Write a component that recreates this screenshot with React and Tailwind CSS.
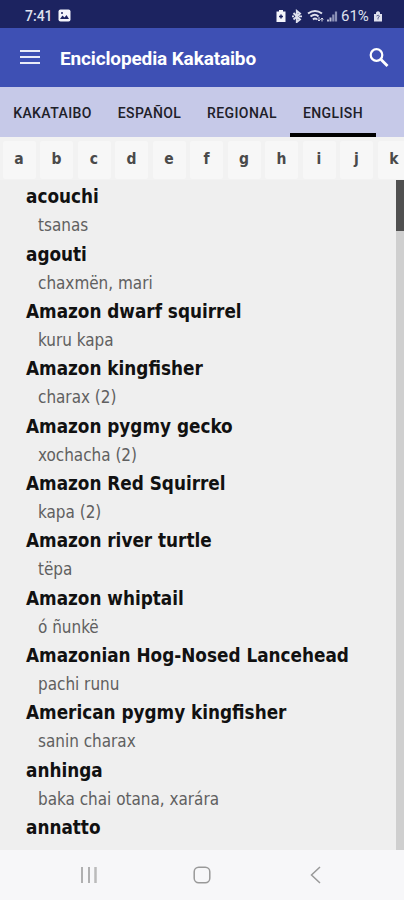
import React from "react";

const ENTRIES = [
  ["acouchi", "tsanas"],
  ["agouti", "chaxmën, mari"],
  ["Amazon dwarf squirrel", "kuru kapa"],
  ["Amazon kingfisher", "charax (2)"],
  ["Amazon pygmy gecko", "xochacha (2)"],
  ["Amazon Red Squirrel", "kapa (2)"],
  ["Amazon river turtle", "tëpa"],
  ["Amazon whiptail", "ó ñunkë"],
  ["Amazonian Hog-Nosed Lancehead", "pachi runu"],
  ["American pygmy kingfisher", "sanin charax"],
  ["anhinga", "baka chai otana, xarára"],
  ["annatto", ""],
];

const LETTERS = ["a", "b", "c", "d", "e", "f", "g", "h", "i", "j", "k"];

function StatusBar() {
  return (
    <div className="flex h-7 shrink-0 items-center bg-[#1c2360] pl-[25px] pr-[21px] pt-[3px] text-[#dfe1ee]">
      <span className="w-[33px] text-[14px] font-medium leading-4">7:41</span>
      <svg className="h-[13px] w-[13px]" viewBox="0 0 13 13">
        <rect x="0.5" y="0.5" width="12" height="12" rx="2" fill="#f4f5fb" />
        <path d="M2 10l2.5-3.5 2 2 2-2.5L11 10z" fill="#1c2360" />
        <circle cx="4" cy="4" r="1" fill="#1c2360" />
      </svg>
      <svg className="ml-auto h-[14px] w-[62px]" viewBox="0 0 62 14">
        <path d="M3 1h4v1.500h2.500V13H0.500V2.500H3z" fill="#f4f5fb" />
        <path d="M5 5.500v4M3 7.500h4" stroke="#1c2360" strokeWidth="1.500" />
        <path d="M17.500 4l6.500 6.500-3.200 2.500V2L24 4.500 17.500 10.500" fill="none" stroke="#dfe1ee" strokeWidth="1.900" />
        <path d="M16 7.300h2m5 0h3" stroke="#dfe1ee" strokeWidth="1.700" />
        <path d="M32 4.500q7-5 14 0M34.500 7.500q4.500-3.500 8 0M37 10.500q2-2 4 0" fill="none" stroke="#dfe1ee" strokeWidth="2" />
        <path d="M43 8v4m-1.500-1.500L43 12l1.500-1.500M46 12.500V9m-1.300 1.500L46 9l1.300 1.500" fill="none" stroke="#dfe1ee" strokeWidth="1" />
        <path d="M52 12.500V10.500M54.500 12.500V8.500" stroke="#b9bdd6" strokeWidth="2" />
        <path d="M57.300 12.500V5.500M60 12.500V2.500" stroke="#8b90b6" strokeWidth="2.200" />
      </svg>
      <span className="ml-[3px] w-[31px] text-[15px] leading-4">61%</span>
      <svg className="ml-[1px] h-[12px] w-[10px]" viewBox="0 0 10 12">
        <path d="M3 4V2.500q2-2.500 4 0V4h2v7.500H1V4z" fill="#dfe1ee" />
        <path d="M3.500 6q2-1.500 3 0l-1.500 2v1.500" fill="none" stroke="#5d638f" />
      </svg>
    </div>
  );
}

function AppBar() {
  return (
    <div className="flex h-[59px] shrink-0 items-center bg-[#3e50b4] pl-5 pr-[15px] text-white">
      <svg className="-mt-px h-4 w-5" viewBox="0 0 20 16">
        <path d="M0 2h20M0 8h20M0 14h20" stroke="#e9ebf8" strokeWidth="2" />
      </svg>
      <h1 className="ml-5 mt-[3px] text-[19px] font-bold tracking-[-0.140px]">Enciclopedia Kakataibo</h1>
      <svg className="ml-auto h-5 w-5" viewBox="0 0 20 20">
        <circle cx="7.500" cy="7" r="5.800" fill="none" stroke="white" strokeWidth="2.200" />
        <path d="M12 11.500l6.500 6.500" stroke="white" strokeWidth="2.800" />
      </svg>
    </div>
  );
}

function Tabs() {
  return (
    <div className="flex h-[50px] shrink-0 bg-[#c6c9e8] text-[14px] font-medium tracking-[0.400px] text-[#202028]">
      <div className="flex w-[105px] items-center justify-center pt-[2px]">KAKATAIBO</div>
      <div className="flex w-[89px] items-center justify-center pt-[2px]">ESPAÑOL</div>
      <div className="flex w-[96px] items-center justify-center pt-[2px]">REGIONAL</div>
      <div className="flex w-[86px] items-center justify-center border-b-4 border-black pt-[6px]">ENGLISH</div>
    </div>
  );
}

function LetterRow() {
  return (
    <div className="flex h-[43px] shrink-0 gap-[4.500px] overflow-hidden bg-[#f2f2f2] pl-[2.500px] pt-1 font-['DejaVu_Sans_Condensed','DejaVu_Sans',sans-serif] text-[15.500px] font-bold text-[#4a4a4a]">
      {LETTERS.map((l) => (
        <div key={l} className="flex h-[38px] w-[33px] shrink-0 items-center justify-center rounded-xs bg-[#f7f7f7]">
          {l}
        </div>
      ))}
    </div>
  );
}

function EntryList() {
  return (
    <div className="flex min-h-0 flex-1 bg-[#efefef]">
      <div className="min-w-0 flex-1 overflow-hidden pl-[26px] pt-[2.200px] font-['DejaVu_Sans_Condensed','DejaVu_Sans',sans-serif]">
        {ENTRIES.map(([word, gloss]) => (
          <div key={word} className="h-[57.370px] whitespace-nowrap">
            <div className="h-[29px] text-[18.750px] font-bold leading-[29px] text-[#111]">{word}</div>
            <div className="h-[28px] pl-3 text-[16.950px] leading-[28.500px] text-[#606060]">{gloss}</div>
          </div>
        ))}
      </div>
      <div className="w-2 bg-[#cfcfcf]">
        <div className="h-[51px] bg-[#505050]" />
      </div>
    </div>
  );
}

function NavBar() {
  return (
    <div className="flex h-[50px] shrink-0 items-center bg-[#f7f7f9] pl-[80px] pr-[83px]">
      <svg className="h-[18px] w-[18px]" viewBox="0 0 18 18">
        <path d="M2 1v16M9 1v16" stroke="#999" strokeWidth="1.500" />
        <path d="M15.500 1v16" stroke="#bbb" strokeWidth="2.500" />
      </svg>
      <svg className="ml-[95px] h-[18px] w-[18px]" viewBox="0 0 18 18">
        <rect x="1.200" y="1.200" width="15.600" height="15.600" rx="4.500" fill="none" stroke="#999" strokeWidth="1.500" />
      </svg>
      <svg className="ml-auto h-[18px] w-[11px]" viewBox="0 0 11 18">
        <path d="M10 1L1.500 9l8.500 8" fill="none" stroke="#999" strokeWidth="1.500" />
      </svg>
    </div>
  );
}

export default function App() {
  return (
    <div className="flex h-[900px] w-[404px] flex-col overflow-hidden bg-[#efefef] font-[Roboto,sans-serif]">
      <StatusBar />
      <AppBar />
      <Tabs />
      <LetterRow />
      <EntryList />
      <NavBar />
    </div>
  );
}
